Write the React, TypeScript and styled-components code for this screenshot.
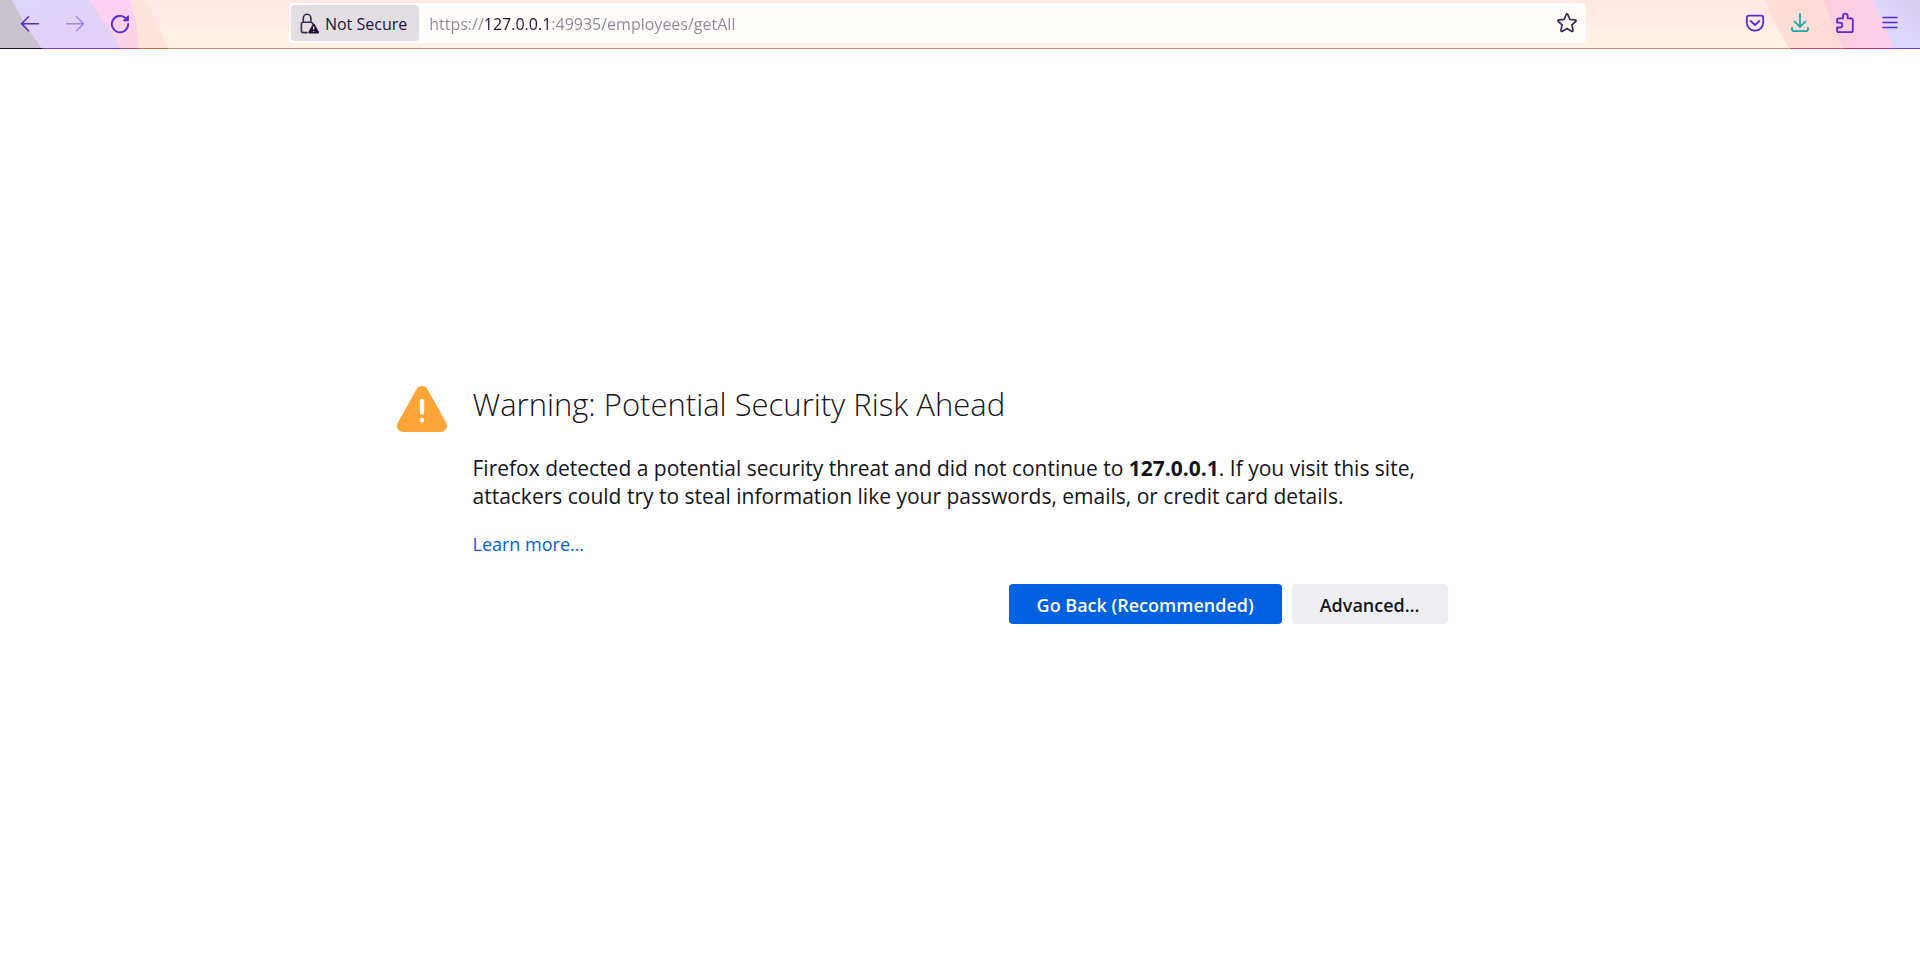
import React from "react";
import styled, { createGlobalStyle } from "styled-components";

const GlobalStyle = createGlobalStyle`
  *, *::before, *::after { box-sizing: border-box; }
  body {
    margin: 0;
    background: #ffffff;
    color: #15141a;
    font-family: "Open Sans", "Noto Sans", sans-serif;
  }
`;

const Page = styled.div`
  display: flex;
  flex-direction: column;
  min-height: 100vh;
`;

const Toolbar = styled.header`
  position: relative;
  display: flex;
  align-items: center;
  height: 49px;
  padding: 3px 7px 6px;
  overflow: hidden;
  background: linear-gradient(#b98b70, #b98b70) left bottom / 100% 1px no-repeat,
    linear-gradient(#ffe8e5, #ffeae4 40%, #fff2e4 80%);
`;

const ThemeArt = styled.svg<{ $side: "left" | "right" }>`
  position: absolute;
  top: 0;
  ${({ $side }) => $side}: 0;
`;

const ButtonGroup = styled.nav`
  position: relative;
  display: flex;
`;

const ToolbarButton = styled.button<{ $color?: string }>`
  display: flex;
  align-items: center;
  justify-content: center;
  width: 45px;
  height: 40px;
  padding: 0;
  border: 0;
  border-radius: 4px;
  background: transparent;
  color: ${({ $color }) => $color ?? "#5b2bd0"};

  &:disabled {
    opacity: 0.45;
  }
`;

const Spacer = styled.div`
  flex: 10 1 0;
`;

const UrlBar = styled.form`
  position: relative;
  display: flex;
  flex: 88 1 0;
  align-items: center;
  height: 40px;
  padding: 2px;
  border-radius: 4px;
  background: #fffcfa;
`;

const IdentityButton = styled.button`
  display: flex;
  align-items: center;
  gap: 5px;
  height: 36px;
  padding: 2px 12px 0 9px;
  border: 0;
  border-radius: 4px;
  background: #e3dee2;
  color: #20123a;
  font-family: inherit;
  font-size: 16px;
  white-space: nowrap;
`;

const UrlInput = styled.input`
  flex: 1;
  min-width: 0;
  height: 36px;
  margin-left: 10px;
  padding: 2px 0 0;
  border: 0;
  outline: 0;
  color: #8e879b;
  font-family: inherit;
  font-size: 16px;
  background: linear-gradient(90deg, #8e879b 55px, #20123a 55px 122px, #8e879b 122px);
  background-clip: text;
  -webkit-background-clip: text;
  -webkit-text-fill-color: transparent;
`;

const StarButton = styled.button`
  display: flex;
  align-items: center;
  justify-content: center;
  width: 34px;
  height: 36px;
  padding: 0;
  border: 0;
  background: transparent;
  color: #382a52;
`;

const Main = styled.main`
  display: grid;
  flex: 1;
  grid-template-columns: minmax(76px, 1fr) minmax(0, 975px) minmax(24px, 1fr);
  align-content: center;
`;

const WarningSign = styled.svg`
  justify-self: end;
  margin: 4px 26px 0 0;
`;

const Title = styled.h1`
  margin: 0 0 28px;
  font-size: 31px;
  font-weight: 300;
  line-height: 44px;
`;

const Description = styled.p`
  max-width: 960px;
  margin: 0 0 22px;
  font-size: 21px;
  line-height: 28px;
`;

const LearnMore = styled.a`
  font-size: 18px;
  line-height: 24px;
  color: #0061e0;
  text-decoration: none;
`;

const Actions = styled.div`
  display: flex;
  flex-wrap: wrap;
  justify-content: flex-end;
  gap: 10px;
  margin-top: 28px;
`;

const ActionButton = styled.button<{ $primary?: boolean }>`
  height: 40px;
  padding: 2px 28px 0;
  border: 0;
  border-radius: 4px;
  background: ${({ $primary }) => ($primary ? "#0061e0" : "#eeeef1")};
  color: ${({ $primary }) => ($primary ? "#fbfbfe" : "#15141a")};
  font-family: inherit;
  font-size: 18px;
  font-weight: 600;
  white-space: nowrap;
`;

const Icon = ({ children, width = 1.8 }: { children: React.ReactNode; width?: number }) => (
  <svg
    width="24"
    height="24"
    viewBox="0 0 24 24"
    fill="none"
    stroke="currentColor"
    strokeWidth={width}
    strokeLinecap="round"
    strokeLinejoin="round"
    aria-hidden="true"
  >
    {children}
  </svg>
);

const LeftArt = () => (
  <ThemeArt $side="left" width="180" height="49" aria-hidden="true">
    <defs>
      <linearGradient id="lilac" x1="0" y1="0" x2="1" y2="1">
        <stop offset="0" stopColor="#dcd6fb" />
        <stop offset="1" stopColor="#e4d0f6" />
      </linearGradient>
      <linearGradient id="rose" x1="0" y1="0" x2="0" y2="1">
        <stop offset="0" stopColor="#ffd0f6" />
        <stop offset="1" stopColor="#fcd2e4" />
      </linearGradient>
    </defs>
    <path d="M0 0H144Q160 24 168 49H0Z" fill="#ffe5d9" />
    <path d="M0 0H130Q138 24 139 49H0Z" fill="url(#rose)" />
    <path d="M0 0H88Q110 28 121 49H0Z" fill="url(#lilac)" />
    <path d="M0 0H12Q20 18 42 49H0Z" fill="#c8c4ce" />
    <path d="M0 48.500H42" stroke="#210b3f" />
    <path d="M42 48.500H120" stroke="#7338c8" />
    <path d="M120 48.500H139" stroke="#b9487e" />
    <path d="M139 48.500H168" stroke="#c26d3d" />
  </ThemeArt>
);

const RightArt = () => (
  <ThemeArt $side="right" width="160" height="49" aria-hidden="true">
    <defs>
      <linearGradient id="peach" x1="0" y1="0" x2="1" y2="0">
        <stop offset="0" stopColor="#ffe0d6" />
        <stop offset="1" stopColor="#ffd0d8" />
      </linearGradient>
      <linearGradient id="pink" x1="0" y1="0" x2="1" y2="0">
        <stop offset="0" stopColor="#fdcdde" />
        <stop offset="1" stopColor="#fbd0ee" />
      </linearGradient>
      <linearGradient id="violet" x1="0" y1="1" x2="1" y2="0">
        <stop offset="0" stopColor="#e2d6fe" />
        <stop offset="0.5" stopColor="#ddd6fb" />
        <stop offset="1" stopColor="#d4cdec" />
      </linearGradient>
    </defs>
    <path d="M5 0Q14 26 30 49H160V0Z" fill="url(#peach)" />
    <path d="M64 0Q72 26 85 49H160V0Z" fill="url(#pink)" />
    <path d="M113 0Q126 26 133 49H160V0Z" fill="url(#violet)" />
    <path d="M30 48.500H85" stroke="#c84f58" />
    <path d="M85 48.500H132" stroke="#c02d88" />
    <path d="M132 48.500H160" stroke="#6e3bd0" />
  </ThemeArt>
);

export default function App() {
  return (
    <>
      <GlobalStyle />
      <Page>
        <Toolbar>
          <LeftArt />
          <RightArt />
          <ButtonGroup aria-label="Navigation">
            <ToolbarButton type="button" aria-label="Back">
              <Icon width={1.6}>
                <path d="M20.500 12.700H3.500M10.500 5.700L3.500 12.700L10.500 19.700" />
              </Icon>
            </ToolbarButton>
            <ToolbarButton type="button" aria-label="Forward" disabled>
              <Icon width={1.6}>
                <path d="M3.500 12.700H20.500M13.500 5.700L20.500 12.700L13.500 19.700" />
              </Icon>
            </ToolbarButton>
            <ToolbarButton type="button" aria-label="Reload">
              <Icon>
                <path d="M20.200 13A8.200 8.200 0 1 1 17.500 7" />
                <path d="M20.400 5V9.800H15.600Z" fill="currentColor" strokeWidth="1" />
              </Icon>
            </ToolbarButton>
          </ButtonGroup>
          <Spacer />
          <UrlBar>
            <IdentityButton type="button">
              <svg width="20" height="22" viewBox="0 0 20 22" aria-hidden="true">
                <path
                  d="M7 19.600H3.200Q1.400 19.600 1.400 17.800V11Q1.400 9.200 3.200 9.200H10.800Q12.300 9.200 12.600 10.400M3.300 9V5.400A3.800 4.200 0 0 1 10.900 5.400V9"
                  fill="none"
                  stroke="#382a52"
                  strokeWidth="1.600"
                  strokeLinecap="round"
                />
                <path
                  d="M13.700 10.500Q14.300 10.500 14.700 11.200L19 19Q19.500 20.400 18 20.400H9.400Q7.900 20.400 8.400 19L12.700 11.200Q13.100 10.500 13.700 10.500Z"
                  fill="#20123a"
                />
                <path d="M13.700 13.600V16.400M13.700 18V18.800" stroke="#e3dee2" strokeWidth="1.400" />
              </svg>
              Not Secure
            </IdentityButton>
            <UrlInput
              type="text"
              aria-label="Address"
              spellCheck={false}
              defaultValue="https://127.0.0.1:49935/employees/getAll"
            />
            <StarButton type="button" aria-label="Bookmark this page">
              <Icon width={1.7}>
                <path d="M11.100 3.600Q12 2.200 12.900 3.600L14.700 8.300L20 8.800Q21.800 9.200 20.700 10.500L16.900 13.900L18 19Q18.100 20.900 16.500 20.200L12 17.600L7.500 20.200Q5.900 20.900 6 19L7.100 13.900L3.300 10.500Q2.200 9.200 4 8.800L9.300 8.300Z" />
              </Icon>
            </StarButton>
          </UrlBar>
          <Spacer />
          <ButtonGroup aria-label="Tools">
            <ToolbarButton type="button" aria-label="Save to Pocket">
              <Icon>
                <path d="M6 4.600H18Q20.200 4.600 20.200 6.800V11.500A8.200 8.200 0 0 1 3.800 11.500V6.800Q3.800 4.600 6 4.600Z" />
                <path d="M7.600 10L12 14L16.400 10" />
              </Icon>
            </ToolbarButton>
            <ToolbarButton type="button" aria-label="Downloads" $color="#18a9ae">
              <Icon>
                <path d="M12 2.800V15.600M6.600 10.600L12 15.800L17.400 10.600" />
                <path d="M4 16.800V18Q4 20.200 6.200 20.200H17.800Q20 20.200 20 18V16.800" />
              </Icon>
            </ToolbarButton>
            <ToolbarButton type="button" aria-label="Extensions">
              <Icon>
                <path d="M5.900 21.200H18Q19.800 21.200 19.800 19.400V9.200Q19.800 7.400 18 7.400H14.600V5A2.300 2.300 0 0 0 10 5V7.400H5.900Q4.100 7.400 4.100 9.200V11.600H6.900A2.450 2.450 0 0 1 6.900 16.500H4.100V19.400Q4.100 21.200 5.900 21.200Z" />
              </Icon>
            </ToolbarButton>
            <ToolbarButton type="button" aria-label="Menu">
              <Icon width={1.6}>
                <path d="M5 6.500H19M5 11.500H19M5 16.500H19" />
              </Icon>
            </ToolbarButton>
          </ButtonGroup>
        </Toolbar>
        <Main>
          <WarningSign width="50" height="46" viewBox="0 0 50 46" aria-hidden="true">
            <path
              d="M19.500 3.200Q21.500 0 25 0T30.500 3.200L49 36.500Q51.200 40.800 48.500 43.800Q46.800 46 43.500 46H6.500Q3.200 46 1.500 43.800Q-1.200 40.800 1 36.500Z"
              fill="#ffa436"
            />
            <path d="M25 15V26.500M25 34.200V34.400" stroke="#fff" strokeWidth="4.400" strokeLinecap="round" />
          </WarningSign>
          <section>
            <Title>Warning: Potential Security Risk Ahead</Title>
            <Description>
              Firefox detected a potential security threat and did not continue to <b>127.0.0.1</b>. If you visit this
              site, attackers could try to steal information like your passwords, emails, or credit card details.
            </Description>
            <LearnMore href="#learn-more">Learn more…</LearnMore>
            <Actions>
              <ActionButton type="button" $primary>
                Go Back (Recommended)
              </ActionButton>
              <ActionButton type="button">Advanced…</ActionButton>
            </Actions>
          </section>
        </Main>
      </Page>
    </>
  );
}
